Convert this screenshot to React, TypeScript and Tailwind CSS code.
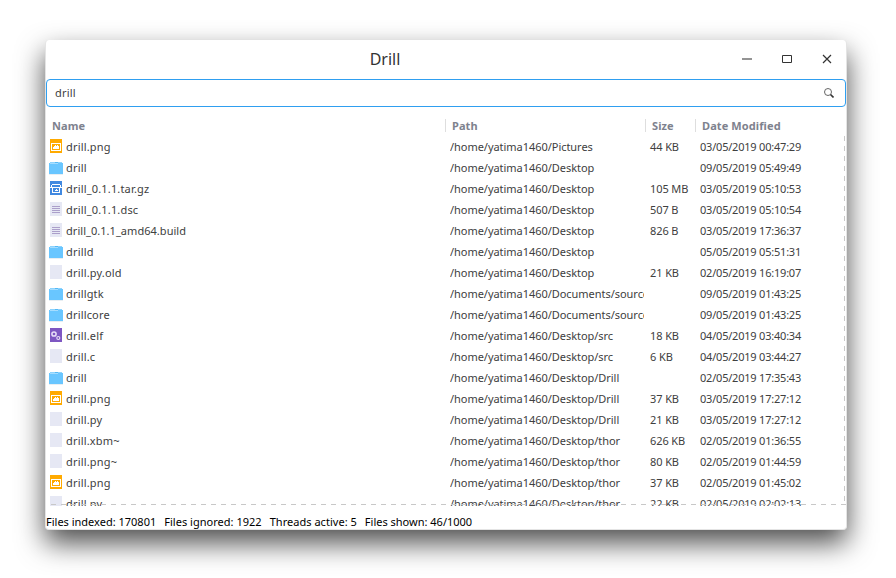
type Kind = 'image' | 'folder' | 'archive' | 'text' | 'blank' | 'exec';

const rows: [Kind, string, string, string, string][] = [
  ['image', 'drill.png', 'Pictures', '44 KB', '03/05/2019 00:47:29'],
  ['folder', 'drill', 'Desktop', '', '09/05/2019 05:49:49'],
  ['archive', 'drill_0.1.1.tar.gz', 'Desktop', '105 MB', '03/05/2019 05:10:53'],
  ['text', 'drill_0.1.1.dsc', 'Desktop', '507 B', '03/05/2019 05:10:54'],
  ['text', 'drill_0.1.1_amd64.build', 'Desktop', '826 B', '03/05/2019 17:36:37'],
  ['folder', 'drilld', 'Desktop', '', '05/05/2019 05:51:31'],
  ['blank', 'drill.py.old', 'Desktop', '21 KB', '02/05/2019 16:19:07'],
  ['folder', 'drillgtk', 'Documents/source', '', '09/05/2019 01:43:25'],
  ['folder', 'drillcore', 'Documents/source', '', '09/05/2019 01:43:25'],
  ['exec', 'drill.elf', 'Desktop/src', '18 KB', '04/05/2019 03:40:34'],
  ['blank', 'drill.c', 'Desktop/src', '6 KB', '04/05/2019 03:44:27'],
  ['folder', 'drill', 'Desktop/Drill', '', '02/05/2019 17:35:43'],
  ['image', 'drill.png', 'Desktop/Drill', '37 KB', '03/05/2019 17:27:12'],
  ['blank', 'drill.py', 'Desktop/Drill', '21 KB', '03/05/2019 17:27:12'],
  ['blank', 'drill.xbm~', 'Desktop/thor', '626 KB', '02/05/2019 01:36:55'],
  ['blank', 'drill.png~', 'Desktop/thor', '80 KB', '02/05/2019 01:44:59'],
  ['image', 'drill.png', 'Desktop/thor', '37 KB', '02/05/2019 01:45:02'],
  ['blank', 'drill.py', 'Desktop/thor', '22 KB', '02/05/2019 02:02:13'],
];

function FileIcon({ kind }: { kind: Kind }) {
  return (
    <svg width="16" height="16" viewBox="0 0 16 16" className="mt-[2px] block shrink-0" shapeRendering="crispEdges">
      {kind === 'folder' && (
        <>
          <path d="M2 3h5v1H2zM9 3h5v1H9z" fill="#8dd3fd" />
          <path d="M7 3h3v1H7z" fill="#54b8f5" />
          <path d="M1 4h14v11H1z" fill="#69c6ff" />
          <path d="M2 4h8v1H2z" fill="#a5ddff" />
          <path d="M1 15h14v1H1z" fill="#e8eef2" />
        </>
      )}
      {kind === 'image' && (
        <>
          <path d="M2 1h12v14H2z" fill="#ffaa00" />
          <path d="M3 5h10v8H3zM4 6v6h8V6z" fill="#fff" fillRule="evenodd" />
          <path d="M5 11V9h1V8h1V7h1v1h1V7h1v1h1v3z" fill="#fff" />
        </>
      )}
      {kind === 'archive' && (
        <>
          <path d="M2 1h12v14H2z" fill="#4189e0" />
          <path d="M4 4h8v1H4zM3 5h1v2H3zM12 5h1v2h-1zM2 7h12v1H2zM4 8h1v5H4zM11 8h1v5h-1zM5 12h6v1H5z" fill="#fff" />
          <path d="M8 9h1v1H8zM7 10h3v1H7z" fill="#fff" />
        </>
      )}
      {kind === 'text' && (
        <>
          <path d="M2 1h12v14H2z" fill="#e6e8f4" />
          <path d="M4 5h8v1H4zM4 7h8v1H4zM4 9h8v1H4zM4 11h8v1H4z" fill="#ab9fca" />
        </>
      )}
      {kind === 'blank' && <path d="M2 1h12v14H2z" fill="#e6e8f4" />}
      {kind === 'exec' && (
        <>
          <path d="M2 1h12v14H2z" fill="#7e57c2" />
          <g fill="none" stroke="#e9e0f8" shapeRendering="auto">
            <circle cx="6" cy="7" r="2.100" strokeWidth="1.500" />
            <circle cx="10.300" cy="11" r="1.500" strokeWidth="1.100" />
          </g>
        </>
      )}
    </svg>
  );
}

export default function App() {
  return (
    <div className="h-[578px] w-[896px] overflow-hidden bg-white pt-10 pl-[45px] font-['Noto_Sans','Open_Sans',sans-serif] text-[11px] text-[#404040]">
      <div className="flex h-[490px] w-[802px] flex-col overflow-hidden rounded-[4px] border border-t-0 border-[#e4e4e4] bg-white shadow-[0_13px_28px_rgba(0,0,0,0.7)]">
        <header className="flex h-[39px] shrink-0 items-start">
          <h1 className="flex-1 pr-[2px] text-center text-[16px] leading-[39px] text-[#333]">Drill</h1>
          <div className="flex w-[120px] text-[#333]">
            <svg width="120" height="38" viewBox="0 0 120 38" fill="none" stroke="currentColor">
              <path d="M16 19h10" stroke="#949494" strokeWidth="2" />
              <path d="M56.500 15.500h9v7h-9z" />
              <path d="M97 15l8 8M105 15l-8 8" strokeWidth="1.200" />
            </svg>
          </div>
        </header>
        <div className="flex h-7 shrink-0 items-center justify-between rounded-[4px] border border-[#2f9ff0] pr-[11px] pl-2">
          <span className="pt-[1px] tracking-[0.2px]">drill</span>
          <svg width="10" height="10" viewBox="0 0 10 10" fill="none" stroke="#555">
            <circle cx="4" cy="4" r="3.500" strokeWidth="0.900" />
            <path d="M6.500 6.500l3 3" strokeWidth="1.600" stroke="#333" />
          </svg>
        </div>
        <div className="mt-2 flex h-[21px] shrink-0 items-center pb-[1px] font-bold tracking-[0.1px] text-[#7e828e]">
          <div className="w-[399px] pl-[6px] leading-[13px]">Name</div>
          <div className="w-[200px] border-l border-[#dedede] pl-[6px] leading-[13px]">Path</div>
          <div className="w-[50px] border-l border-[#dedede] pl-[6px] leading-[13px]">Size</div>
          <div className="flex-1 border-l border-[#dedede] pl-[6px] leading-[13px]">Date Modified</div>
        </div>
        <div className="relative h-[370px] shrink-0 overflow-hidden">
          {rows.map(([kind, name, path, size, date], i) => (
            <div key={i} className="flex h-[21px] items-start leading-[22px] whitespace-nowrap">
              <div className="flex w-[404px] items-start gap-[2px] pl-[2px]">
                <FileIcon kind={kind} />
                <span className={name.length > 20 ? 'tracking-[0.04px]' : 'tracking-[0.17px]'}>{name}</span>
              </div>
              <div className="h-[21px] w-[194px] overflow-hidden tracking-[-0.04px]">/home/yatima1460/{path}</div>
              <div className="w-[50px] pl-[6px] tracking-[-0.1px]">{size}</div>
              <div className="pl-[6px] tracking-[-0.21px]">{date}</div>
            </div>
          ))}
          <div className="absolute bottom-[1px] left-0 h-px w-full bg-[repeating-linear-gradient(90deg,transparent_0_5px,#c8c8c8_5px_10px)]" />
          <div className="absolute top-0 right-[1px] h-[368px] w-px bg-[repeating-linear-gradient(180deg,#c8c8c8_0_5px,transparent_5px_10px)]" />
        </div>
        <footer className="flex flex-1 items-center gap-2 whitespace-nowrap pt-[8px] leading-[16px] text-black">
          <span>Files indexed: 170801</span>
          <span className="tracking-[0.02px]">Files ignored: 1922</span>
          <span className="tracking-[0.03px]">Threads active: 5</span>
          <span>Files shown: 46/1000</span>
        </footer>
      </div>
    </div>
  );
}
